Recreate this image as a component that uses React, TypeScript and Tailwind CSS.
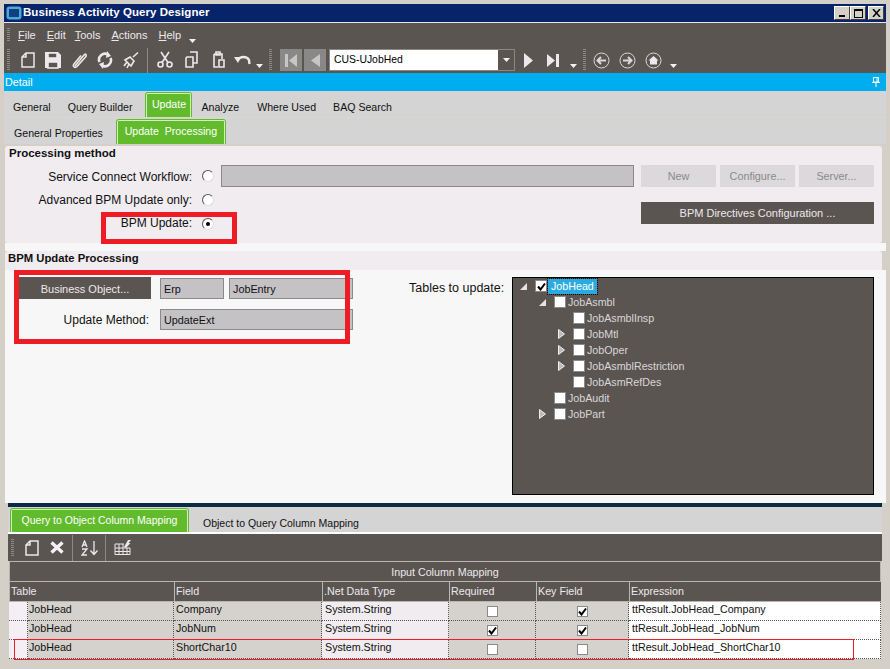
import React from "react";

const C = "#ece8ec";

function Drop() {
  return <svg width="7" height="4" viewBox="0 0 7 4" className="mt-[14px]"><path d="M0 0H7L3.5 4Z" fill="#f4f0f4" /></svg>;
}
function Grip({ h = 22 }: { h?: number }) {
  return <div className="w-[3px] border-y-0 bg-[repeating-linear-gradient(#8f8985_0_1px,transparent_1px_2px)]" style={{ height: h }} />;
}
function Ic({ children, w = 18, cls = "" }: { children: React.ReactNode; w?: number; cls?: string }) {
  return <svg width={w} height={18} viewBox="0 0 18 18" className={cls} fill="none" stroke={C} strokeWidth="1.6">{children}</svg>;
}
const NewDoc = () => <Ic><path d="M7 2H15V16H3V6Z M7 2V6H3" strokeWidth="1.5" /></Ic>;

function Tab({ w, h, children, cls = "", inner = "pb-[2px]" }: { w: number; h: number; children: React.ReactNode; cls?: string; inner?: string }) {
  return (
    <span className={`bg-[#62bb2c] p-[1px] pb-0 rounded-t-[3px] flex ${cls}`} style={{ width: w, height: h }}>
      <span className={`flex-1 bg-[#62bb2c] border border-b-0 border-[#d3ecc2] rounded-t-[2px] text-white flex items-center justify-center ${inner}`}>{children}</span>
    </span>
  );
}
function Radio({ on }: { on?: boolean }) {
  return (
    <span className="w-[12px] h-[12px] rounded-full bg-white border border-[#555] border-r-[#ddd] border-b-[#ddd] flex items-center justify-center">
      {on && <span className="w-[4px] h-[4px] rounded-full bg-black" />}
    </span>
  );
}
function Check({ on, small }: { on?: boolean; small?: boolean }) {
  return (
    <span className={`${small ? "w-[12px] h-[12px] border-[#8a8a8a]" : "w-[11px] h-[11px] border-[#8a8a8a]"} border bg-white flex items-center justify-center shrink-0`}>
      {on && <svg width="9" height="9" viewBox="0 0 9 9"><path d="M1 4.5L3.5 7.5L8 1.5" fill="none" stroke="#000" strokeWidth="2" /></svg>}
    </span>
  );
}
function Field({ children, cls = "" }: { children?: React.ReactNode; cls?: string }) {
  return <div className={`bg-[#c4c2c5] border border-[#8a8a8a] text-[#111] text-[10.8px] pl-[3px] pt-[2px] flex items-center ${cls}`}>{children}</div>;
}
function DisBtn({ t }: { t: string }) {
  return <div className="w-[75px] h-[22px] bg-[#dbd9db] text-[#8a8a8a] text-[10.8px] flex items-center justify-center">{t}</div>;
}
function TreeRow({ ind, label, arrow, on, sel }: { ind: number; label: string; arrow?: "open" | "closed"; on?: boolean; sel?: boolean }) {
  return (
    <div className="h-[16px] flex items-center text-[10.7px]" style={{ paddingLeft: ind }}>
      <span className="w-[15px] flex items-center">
        {arrow === "open" && <svg width="7" height="7" viewBox="0 0 7 7"><path d="M0 7H7V0Z" fill="#e6e2e6" /></svg>}
        {arrow === "closed" && <svg width="7" height="10" viewBox="0 0 7 10"><path d="M0.5 0.5L6.5 5L0.5 9.5Z" fill="#bbb" stroke="#eee" /></svg>}
      </span>
      <Check on={on} small />
      {sel ? (
        <span className="ml-[1px] h-[15px] bg-[#29abe2] text-white px-[3px] flex items-center outline-1 outline-dotted outline-[#0a0a0a]">{label}</span>
      ) : (
        <span className="ml-[2px] text-[#d9d5d9]">{label}</span>
      )}
    </div>
  );
}
const cols = "grid grid-cols-[19px_146px_148px_127px_87px_93px_252px]";
function Row({ field, req, key2, expr }: { field: string; req?: boolean; key2?: boolean; expr: string }) {
  const d = "border-r border-b border-dotted border-[#555] h-[19px] flex items-center pb-[3px]";
  return (
    <div className={cols}>
      <div className={`${d} bg-[#f3eff5]`} />
      <div className={`${d} bg-[#d5d2cd] pl-[1px] text-[#111]`}>JobHead</div>
      <div className={`${d} bg-[#d5d2cd] pl-[2px] text-[#111]`}>{field}</div>
      <div className={`${d} bg-[#f0ecf0] pl-[3px] text-[#111]`}>System.String</div>
      <div className={`${d} bg-[#d5d2cd] justify-center !pb-0`}><Check on={req} /></div>
      <div className={`${d} bg-[#d5d2cd] justify-center !pb-0`}><Check on={key2} /></div>
      <div className={`${d} bg-white pl-[3px] text-[#111]`}>{expr}</div>
    </div>
  );
}

export default function App() {
  return (
    <div
      className="relative w-[890px] h-[669px] overflow-hidden bg-[#d4d0c8] pt-[4px] pl-[4px] pr-[4px] text-[11px] leading-none text-[#111]"
      style={{ fontFamily: '"Liberation Sans", Arial, sans-serif' }}
    >
      {/* Title bar */}
      <div className="h-[18px] bg-[#07246b] flex items-center justify-between pr-[2px] border-b-0">
        <div className="flex items-center gap-[1px] pl-[2px]">
          <svg width="16" height="14" viewBox="0 0 16 14"><rect x="0.5" y="0.5" width="15" height="13" rx="3" fill="#4aa9d8" /><rect x="3" y="3" width="10" height="8" fill="#12407f" /></svg>
          <span className="text-white font-bold text-[11.5px] tracking-[0.07px]">Business Activity Query Designer</span>
        </div>
        <div className="flex">
          {[0, 1].map((i) => (
            <div key={i} className="w-[16px] h-[14px] bg-[#d4d0c8] border border-white border-r-[#404040] border-b-[#404040] flex items-center justify-center">
              {i === 0 ? <div className="w-[6px] h-[2px] bg-black mt-[6px]" /> : <div className="w-[9px] h-[9px] border border-black border-t-2" />}
            </div>
          ))}
          <div className="ml-[2px] w-[16px] h-[14px] bg-[#d4d0c8] border border-white border-r-[#404040] border-b-[#404040] flex items-center justify-center">
            <svg width="9" height="8" viewBox="0 0 9 8"><path d="M1 0L8 8M8 0L1 8" stroke="#000" strokeWidth="1.5" /></svg>
          </div>
        </div>
      </div>
      <div className="h-[1px] bg-[#e8e8e8]" />
      {/* Menu row */}
      <div className="h-[24px] bg-[#5b5551] flex items-center pl-[3px] text-[#ece8ec]">
        <Grip h={14} />
        <div className="flex ml-[8px] gap-[11px] pt-[1px]">
          <span><u>F</u>ile</span><span><u>E</u>dit</span><span className="-ml-[2px]"><u>T</u>ools</span><span><u>A</u>ctions</span><span><u>H</u>elp</span>
        </div>
        <span className="ml-[8px] -mt-[2px]"><Drop /></span>
      </div>
      {/* Tool row */}
      <div className="h-[26px] bg-[#5b5551] flex items-center pl-[3px]">
        <Grip />
        <div className="flex items-center ml-[9px]">
          <NewDoc />
          <span className="ml-[7px]">
            <Ic><path d="M1 1H14L17 4V17H1Z" fill={C} stroke="none" /><rect x="4" y="2" width="9" height="5" fill="#5b5551" /><rect x="4" y="11" width="10" height="6" fill="#5b5551" /></Ic>
          </span>
          <span className="ml-[8px]">
            <Ic><path d="M5 15L14 4C15.5 2 17 4 15.5 6L7 15.5C5 17.5 2 15.5 4 13L11 4.5" /></Ic>
          </span>
          <span className="ml-[8px]">
            <Ic><path d="M3.5 11A6 6 0 0 1 12 3.5M14.5 7A6 6 0 0 1 6 14.5" strokeWidth="2.6" /><path d="M11 0L15 5L10 7ZM7 18L3 13L8 11Z" fill={C} stroke="none" /></Ic>
          </span>
          <span className="ml-[8px]">
            <Ic><path d="M11 6L16 1.5M3 9L9 15L12 10L8 6Z M5 11L2 15M7 13L5 17" /></Ic>
          </span>
          <div className="w-[1px] h-[25px] bg-[#8f8985] ml-[7px]" />
          <span className="ml-[8px]">
            <Ic><circle cx="4.5" cy="13.5" r="2.5" /><circle cx="13.5" cy="13.5" r="2.5" /><path d="M6 11.5L13 1M12 11.5L5 1" /></Ic>
          </span>
          <span className="ml-[9px]">
            <Ic><path d="M7 1H14V12H10M4 6H10V16H3V7Z" /></Ic>
          </span>
          <span className="ml-[8px]">
            <Ic><path d="M5 3H13V8M5 3V16H9M7 1H11V4H7ZM10 9H15V16H10Z" /></Ic>
          </span>
          <span className="ml-[7px]">
            <Ic><path d="M4 9A6 5 0 0 1 15 9L15.5 13" strokeWidth="2.4" /><path d="M0 6H7L4 12Z" fill={C} stroke="none" /></Ic>
          </span>
          <span className="ml-[4px] -mt-[3px]"><Drop /></span>
          <span className="ml-[6px]"><Grip /></span>
          <div className="ml-[8px] w-[22px] h-[22px] bg-[#8a8886] flex items-center justify-center">
            <svg width="12" height="13" viewBox="0 0 12 13"><path d="M0 0H3V13H0ZM12 0V13L4 6.5Z" fill="#c7c5c5" /></svg>
          </div>
          <div className="ml-[2px] w-[22px] h-[22px] bg-[#8a8886] flex items-center justify-center">
            <svg width="9" height="13" viewBox="0 0 9 13"><path d="M9 0V13L0 6.5Z" fill="#c7c5c5" /></svg>
          </div>
          <div className="ml-[3px] w-[186px] h-[22px] border border-[#8a8886] flex">
            <div className="flex-1 bg-white flex items-center pl-[4px] pt-[1px] text-black text-[10.4px]">CUS-UJobHed</div>
            <div className="w-[16px] flex items-center justify-center">
              <svg width="7" height="4" viewBox="0 0 7 4"><path d="M0 0H7L3.5 4Z" fill="#f4f0f4" /></svg>
            </div>
          </div>
          <svg width="9" height="15" viewBox="0 0 9 15" className="ml-[9px]"><path d="M0 0L9 7.5L0 15Z" fill={C} /></svg>
          <svg width="12" height="13" viewBox="0 0 12 13" className="ml-[14px]"><path d="M0 0L8 6.5L0 13ZM9 0H12V13H9Z" fill={C} /></svg>
          <span className="ml-[11px] -mt-[3px]"><Drop /></span>
          <span className="ml-[6px]"><Grip /></span>
          <svg width="17" height="17" viewBox="0 0 17 17" className="ml-[7px]" fill="none" stroke="#dcd8dc"><circle cx="8.5" cy="8.5" r="7.5" /><path d="M13 8.5H5M8 5L4.5 8.5L8 12" strokeWidth="2" /></svg>
          <svg width="17" height="17" viewBox="0 0 17 17" className="ml-[9px]" fill="none" stroke="#dcd8dc"><circle cx="8.5" cy="8.5" r="7.5" /><path d="M4 8.5H12M9 5L12.5 8.5L9 12" strokeWidth="2" /></svg>
          <svg width="17" height="17" viewBox="0 0 17 17" className="ml-[9px]" fill="none" stroke="#dcd8dc"><circle cx="8.5" cy="8.5" r="7.5" /><path d="M3.5 8.5L8.5 4L13.5 8.5H12V12.5H5V8.5Z" fill="#ece8ec" stroke="none" /></svg>
          <span className="ml-[8px] -mt-[3px]"><Drop /></span>
        </div>
      </div>
      {/* Detail bar */}
      <div className="h-[18px] bg-[#00aeef] flex items-center justify-between pl-[1px] pr-[6px] text-white text-[10.8px]">
        <span>Detail</span>
        <svg width="8" height="10" viewBox="0 0 8 10"><path d="M1.5 0.5H6.5V5H1.5ZM0 5.5H8M4 5.5V10M5 1V5" fill="none" stroke="#fff" /></svg>
      </div>
      {/* Main tabs */}
      <div className="h-[27px] bg-[#d4d4d4] border-b border-[#dcd6d0] flex items-end pl-[9px] text-[10.6px]">
        <span className="mb-[4px]">General</span>
        <span className="ml-[17px] mb-[4px]">Query Builder</span>
        <Tab w={47} h={25} cls="ml-[13px]">Update</Tab>
        <span className="ml-[9px] mb-[4px]">Analyze</span>
        <span className="ml-[18px] mb-[4px]">Where Used</span>
        <span className="ml-[17px] mb-[4px]">BAQ Search</span>
      </div>
      {/* Sub tabs */}
      <div className="h-[26px] bg-[#d4d4d4] flex items-end pl-[10px] text-[10.6px]">
        <span className="mb-[5px]">General Properties</span>
        <Tab w={110} h={25} cls="ml-[13px]">Update&nbsp; Processing</Tab>
      </div>
      {/* Processing group */}
      <div className="h-[2px]" />
      <div className="ml-[1px] mr-[4px] h-[97px] bg-[#f0ecf0] rounded-[3px] pl-[4px] pt-[2px] text-[12px]">
        <div className="font-bold text-[#111] h-[12px] text-[11.5px]">Processing method</div>
        <div className="flex mt-[4px]">
          <div className="w-[183px] pt-[7px] flex flex-col">
            <div className="flex justify-end h-[23px]">Service Connect Workflow:</div>
            <div className="flex justify-end h-[23px]">Advanced BPM Update only:</div>
            <div className="flex justify-end">BPM Update:</div>
          </div>
          <div className="ml-[10px] pt-[6px] flex flex-col gap-[12px]">
            <Radio /><Radio /><Radio on />
          </div>
          <div className="ml-[7px] w-[653px] pt-[1px]">
            <div className="flex items-center">
              <Field cls="w-[413px] h-[22px]" />
              <div className="ml-[7px] flex gap-[4px]"><DisBtn t="New" /><DisBtn t="Configure..." /><DisBtn t="Server..." /></div>
            </div>
            <div className="ml-[420px] mt-[15px] w-[233px] h-[22px] bg-[#5b5551] text-[#ece8ec] text-[11px] flex items-center justify-center">BPM Directives Configuration ...</div>
          </div>
        </div>
      </div>
      {/* BPM group */}
      <div className="h-[8px] bg-[#f7f7f7] ml-[1px]" />
      <div className="ml-[1px] mr-[4px] h-[19px] bg-[#f0ecf0] rounded-t-[3px] pl-[3px] pt-[2px] font-bold text-[11.3px]">BPM Update Processing</div>
      <div className="ml-[1px] bg-[#f7f7f7] h-[233px] flex pt-[7px]">
        <div className="ml-[14px] w-[334px]">
          <div className="flex">
            <div className="w-[132px] h-[22px] bg-[#5b5551] text-[#ece8ec] pt-[2px] flex items-center justify-center">Business Object...</div>
            <Field cls="ml-[9px] w-[64px] h-[21px] mt-[1px]">Erp</Field>
            <Field cls="ml-[5px] w-[124px] h-[21px] mt-[1px]">JobEntry</Field>
          </div>
          <div className="flex mt-[10px]">
            <div className="w-[130px] flex justify-end items-center text-[12px]">Update Method:</div>
            <Field cls="ml-[11px] w-[193px] h-[21px]">UpdateExt</Field>
          </div>
        </div>
        <div className="ml-[56px] mt-[5px] w-[96px] h-[14px] text-[12.5px] whitespace-nowrap">Tables to update:</div>
        <div className="ml-[7px] w-[362px] h-[218px] bg-[#5b5551] border border-black">
          <TreeRow ind={7} label="JobHead" arrow="open" on sel />
          <TreeRow ind={26} label="JobAsmbl" arrow="open" />
          <TreeRow ind={45} label="JobAsmblInsp" />
          <TreeRow ind={45} label="JobMtl" arrow="closed" />
          <TreeRow ind={45} label="JobOper" arrow="closed" />
          <TreeRow ind={45} label="JobAsmblRestriction" arrow="closed" />
          <TreeRow ind={45} label="JobAsmRefDes" />
          <TreeRow ind={26} label="JobAudit" />
          <TreeRow ind={26} label="JobPart" arrow="closed" />
        </div>
      </div>
      {/* Bottom section */}
      <div className="ml-[4px] mr-[4px] h-[4px] bg-[#0b2a45]" />
      <div className="ml-[4px] mr-[4px] h-[25px] bg-[#d4d4d4] flex items-end pl-[2px] text-[10.5px]">
        <Tab w={179} h={24} inner="pb-[1px]">Query to Object Column Mapping</Tab>
        <span className="ml-[14px] mb-[4px]">Object to Query Column Mapping</span>
      </div>
      <div className="ml-[4px] mr-[4px] h-[2px] bg-white" />
      <div className="ml-[4px] mr-[4px] h-[27px] bg-[#5b5551] flex items-center pl-[3px]">
        <Grip h={18} />
        <span className="ml-[9px]"><NewDoc /></span>
        <svg width="14" height="13" viewBox="0 0 14 13" className="ml-[9px]"><path d="M1.5 1.5L12.5 11.5M12.5 1.5L1.5 11.5" stroke="#f4f0f4" strokeWidth="3.4" /></svg>
        <div className="ml-[8px] w-[1px] h-[26px] bg-[#8f8985]" />
        <svg width="18" height="16" viewBox="0 0 18 16" className="ml-[8px]" fill="none" stroke="#ece8ec"><path d="M1 7L3.5 1L6 7M2 5H5M1 9H6L1 15H6M13 1V14M9.5 10.5L13 14.5L16.5 10.5" strokeWidth="1.3" /></svg>
        <div className="ml-[6px] w-[1px] h-[26px] bg-[#8f8985]" />
        <svg width="17" height="15" viewBox="0 0 17 15" className="ml-[8px]" fill="none" stroke="#ece8ec"><path d="M1 4H10M1 8H16M1 11.5H16M1 14.5H16M1 4V14.5M5 4V14.5M9 4V14.5M13 8V14.5M16 8V14.5" /><path d="M10 7L14 0H17L14.5 3H16.5L12 8Z" fill="#ece8ec" stroke="none" /></svg>
      </div>
      {/* Grid */}
      <div className="ml-[5px] w-[872px] text-[#ece8ec] text-[10.7px]">
        <div className="h-[21px] bg-[#5b5551] border border-[#b9b5b3] pt-[2px] flex items-center justify-center">Input Column Mapping</div>
        <div className="h-[20px] bg-[#5b5551] grid grid-cols-[165px_148px_127px_87px_93px_252px] border-b border-[#b9b5b3]">
          {["Table", "Field", ".Net Data Type", "Required", "Key Field", "Expression"].map((t) => (
            <div key={t} className="border-l border-[#b9b5b3] pl-[1px] flex items-center">{t}</div>
          ))}
        </div>
        <Row field="Company" key2 expr="ttResult.JobHead_Company" />
        <Row field="JobNum" req key2 expr="ttResult.JobHead_JobNum" />
        <Row field="ShortChar10" expr="ttResult.JobHead_ShortChar10" />
      </div>
      {/* Annotations */}
      <div className="absolute left-[101px] top-[212px] w-[136px] h-[32px] border-[5px] border-[#ee1c25]" />
      <div className="absolute left-[14px] top-[270px] w-[336px] h-[74px] border-[5px] border-[#ee1c25]" />
      <div className="absolute left-[14px] top-[639px] w-[840px] h-[21px] border border-[#ee1c25]" />
    </div>
  );
}
